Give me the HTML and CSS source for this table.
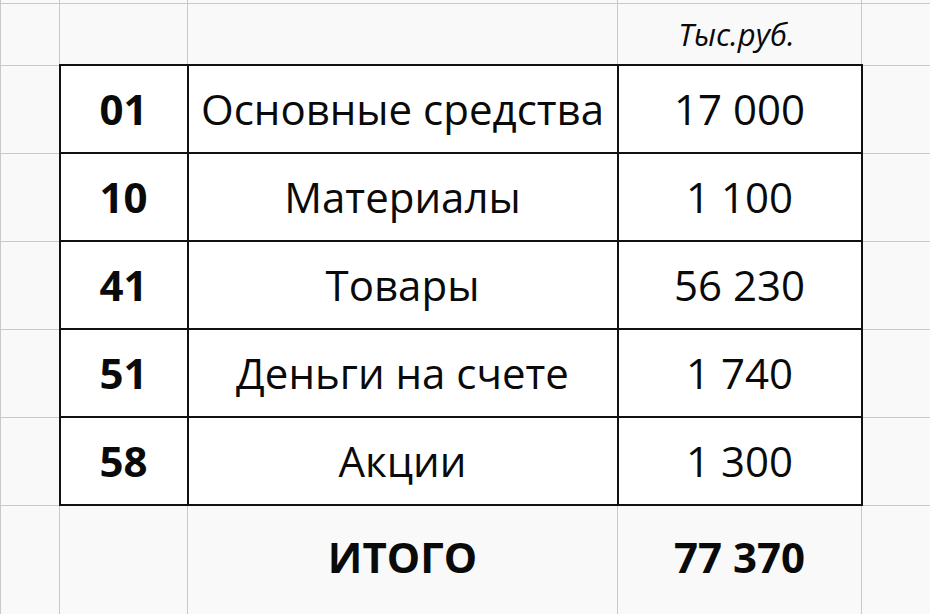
FILE: index.html
```html
<!DOCTYPE html>
<html lang="ru">
<head>
<meta charset="utf-8">
<link rel="stylesheet" href="styles.css">
</head>
<body>
<table class="sheet">
  <colgroup>
    <col class="c-a">
    <col class="c-b">
    <col class="c-c">
    <col class="c-d">
    <col class="c-e">
  </colgroup>
  <tr class="r-top"><td></td><td></td><td></td><td></td><td></td></tr>
  <tr class="r-head">
    <td class="out"></td><td class="out"></td><td class="out"></td>
    <td class="out unit">Тыс.руб.</td><td class="out"></td>
  </tr>
  <tr class="r-data">
    <td class="out"></td><td class="in code">01</td><td class="in">Основные средства</td><td class="in">17 000</td><td class="out"></td>
  </tr>
  <tr class="r-data">
    <td class="out"></td><td class="in code">10</td><td class="in">Материалы</td><td class="in">1 100</td><td class="out"></td>
  </tr>
  <tr class="r-data">
    <td class="out"></td><td class="in code">41</td><td class="in">Товары</td><td class="in">56 230</td><td class="out"></td>
  </tr>
  <tr class="r-data">
    <td class="out"></td><td class="in code">51</td><td class="in">Деньги на счете</td><td class="in">1 740</td><td class="out"></td>
  </tr>
  <tr class="r-data">
    <td class="out"></td><td class="in code">58</td><td class="in">Акции</td><td class="in">1 300</td><td class="out"></td>
  </tr>
  <tr class="r-total">
    <td class="out"></td><td class="out"></td><td class="out total">ИТОГО</td><td class="out total">77 370</td><td class="out"></td>
  </tr>
</table>
</body>
</html>
```
FILE: styles.css
```css
html, body {
  margin: 0;
  padding: 0;
  background: #f9f9f9;
  overflow: hidden;
}
.sheet {
  border-collapse: collapse;
  table-layout: fixed;
  width: 931px;
  margin-top: -1px;
  font-family: "Open Sans", "Noto Sans", sans-serif;
  color: #0a0a0a;
}
.c-a { width: 59px; }
.c-b { width: 128px; }
.c-c { width: 430px; }
.c-d { width: 244px; }
.c-e { width: 70px; }
.sheet td {
  border: 1px solid #c9c9c9;
  padding: 0;
  text-align: center;
  vertical-align: middle;
  font-size: 42px;
  line-height: 1;
  white-space: nowrap;
  background: #f9f9f9;
}
.r-top td { height: 4px; border-top: none; }
.r-head td { height: 60px; }
.r-data td { height: 86px; }
.r-total td { height: 102px; padding-bottom: 8px; }
.sheet td.in {
  border: 2px solid #111;
  background: #fff;
}
.code { font-weight: 700; }
.unit {
  font-size: 31px !important;
  font-style: italic;
  padding-right: 6px !important;
}
.total { font-weight: 700; }
```
